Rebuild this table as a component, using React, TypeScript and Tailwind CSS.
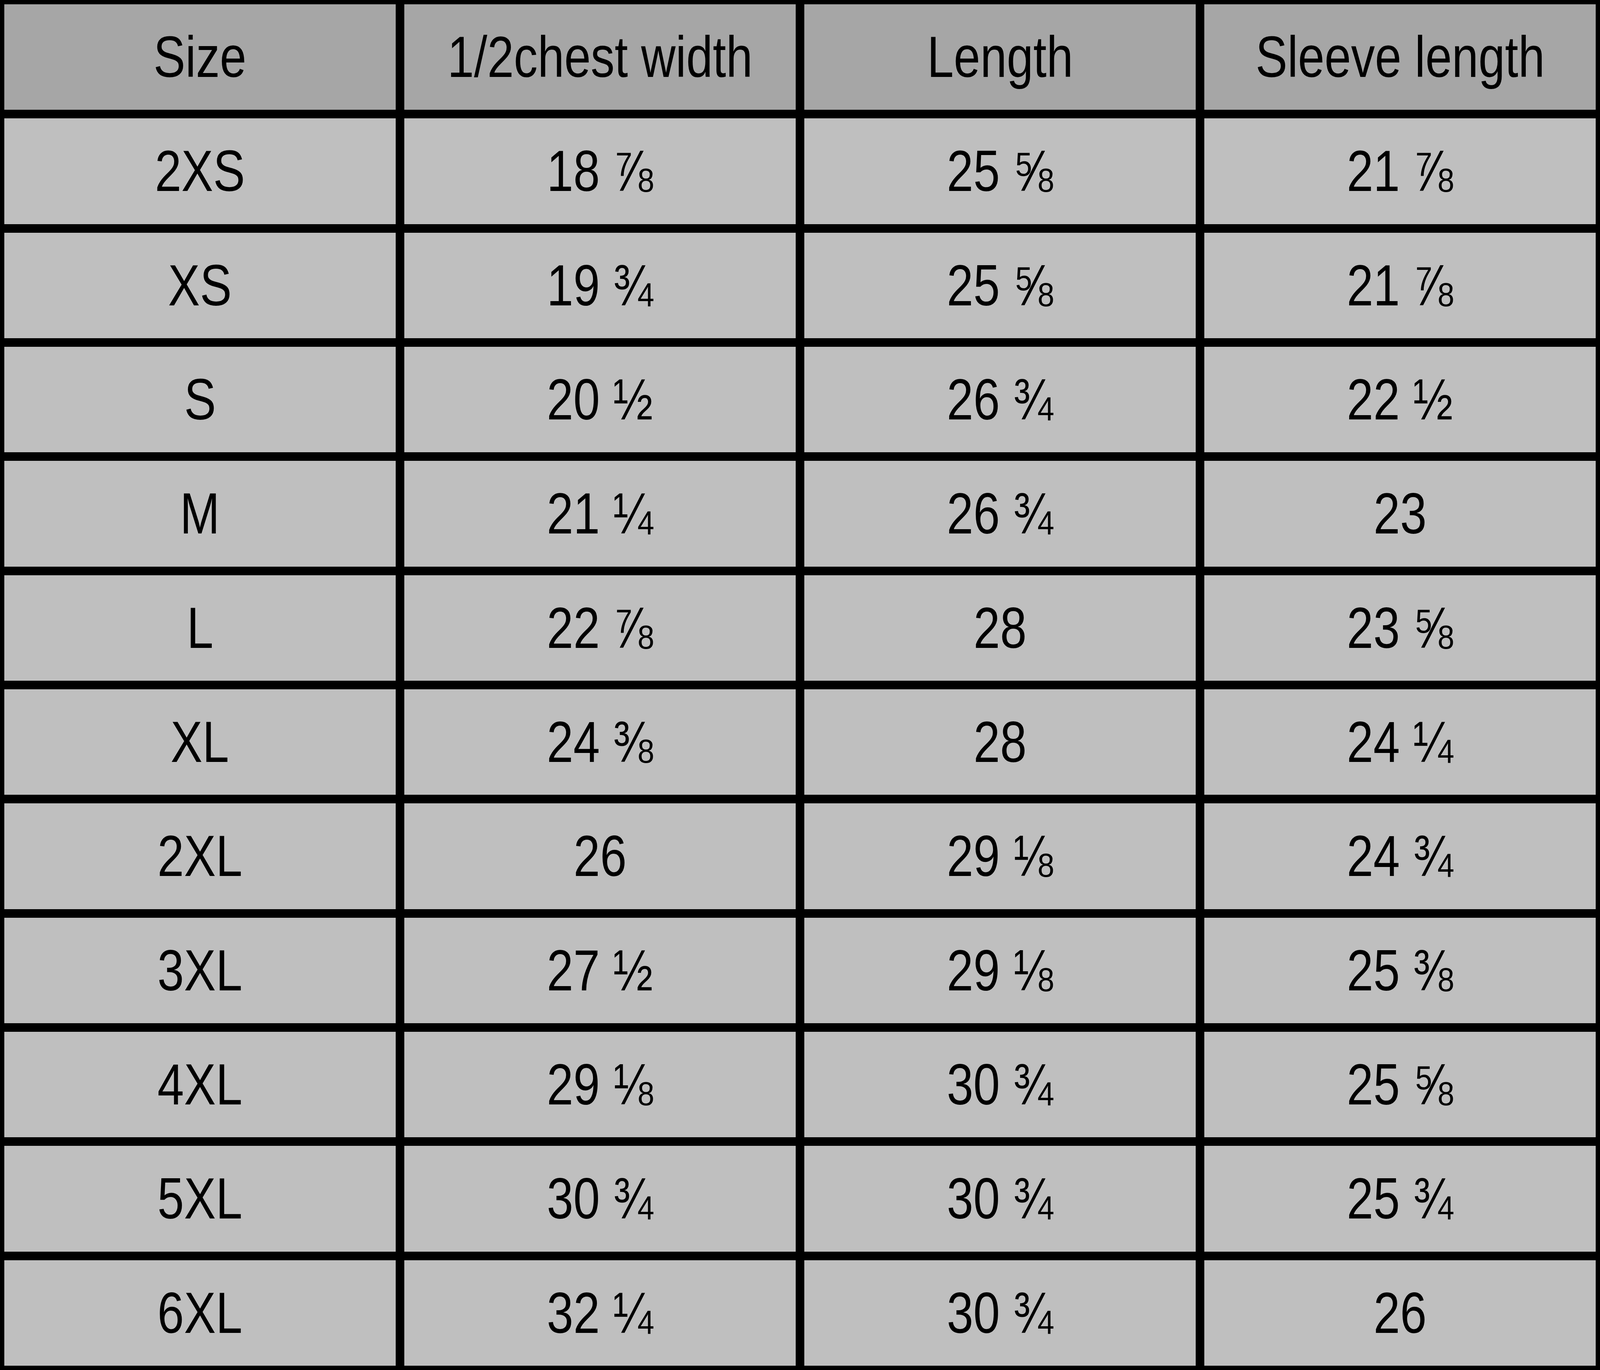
import { useEffect, useState } from "react";

const headers = ["Size", "1/2chest width", "Length", "Sleeve length"];

const rows: [string, string, string, string][] = [
  ["2XS", "18 ⅞", "25 ⅝", "21 ⅞"],
  ["XS", "19 ¾", "25 ⅝", "21 ⅞"],
  ["S", "20 ½", "26 ¾", "22 ½"],
  ["M", "21 ¼", "26 ¾", "23"],
  ["L", "22 ⅞", "28", "23 ⅝"],
  ["XL", "24 ⅜", "28", "24 ¼"],
  ["2XL", "26", "29 ⅛", "24 ¾"],
  ["3XL", "27 ½", "29 ⅛", "25 ⅜"],
  ["4XL", "29 ⅛", "30 ¾", "25 ⅝"],
  ["5XL", "30 ¾", "30 ¾", "25 ¾"],
  ["6XL", "32 ¼", "30 ¾", "26"],
];

// the chart was drawn for a 4961x3508 sheet; squeeze glyphs if the window is narrower
function useSqueeze(): number {
  const calc = () => {
    if (typeof window === "undefined") return 1;
    const r = window.innerWidth / window.innerHeight / (4961 / 3508);
    return Math.min(1, Math.max(0.5, r));
  };
  const [sx, setSx] = useState(calc);
  useEffect(() => {
    const onResize = () => setSx(calc());
    window.addEventListener("resize", onResize);
    return () => window.removeEventListener("resize", onResize);
  }, []);
  return sx;
}

function Cell({ text, head, sx }: { text: string; head?: boolean; sx: number }) {
  return (
    <div
      className={`flex min-w-0 items-center justify-center overflow-hidden ${head ? "bg-[#a6a6a6]" : "bg-[#bfbfbf]"}`}
    >
      <span className="inline-block whitespace-pre leading-none" style={{ transform: `scaleX(${sx})` }}>
        {text}
      </span>
    </div>
  );
}

export default function App() {
  const sx = useSqueeze();
  return (
    <div className="grid h-screen w-full grid-cols-4 grid-rows-12 gap-[22px] bg-black p-[11px] font-['Liberation_Sans',Arial,sans-serif] text-[148px] text-black">
      {headers.map((h) => (
        <Cell key={h} text={h} head sx={sx} />
      ))}
      {rows.map((r) => r.map((v, i) => <Cell key={`${r[0]}-${i}`} text={v} sx={sx} />))}
    </div>
  );
}
